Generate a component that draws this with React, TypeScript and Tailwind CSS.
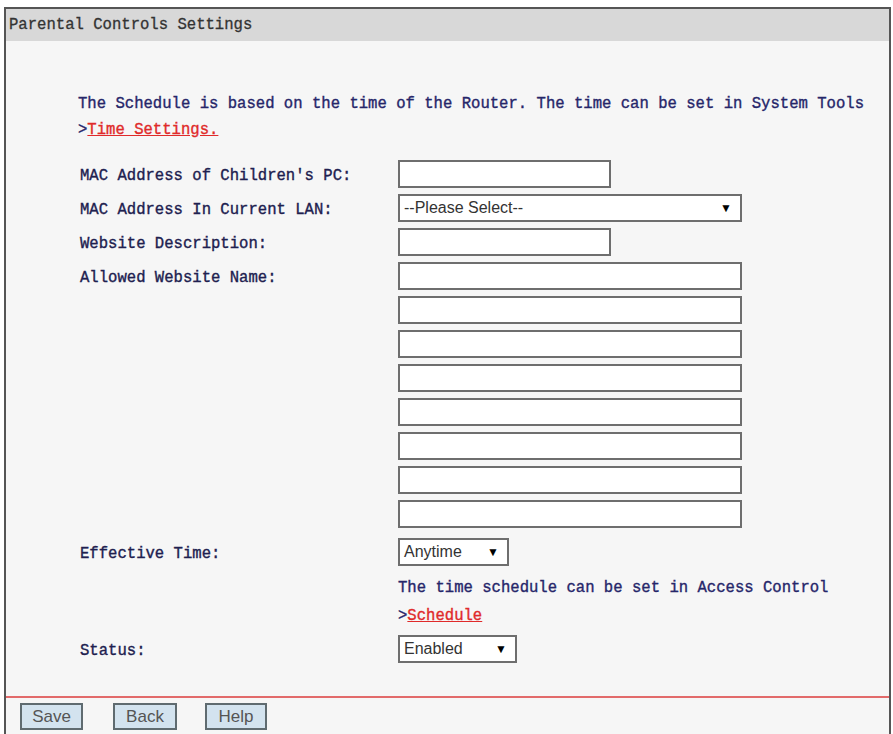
const mono = { fontFamily: '"Liberation Mono", "DejaVu Sans Mono", monospace' };

const TextBox = ({ wide }: { wide?: boolean }) => (
  <div
    className={`h-[28px] border-2 border-[#6e6e6e] bg-white ${wide ? "w-[344px]" : "w-[213px]"}`}
  />
);

const Dropdown = ({ value, width }: { value: string; width: string }) => (
  <div
    className={`flex h-[28px] items-center justify-between border-2 border-[#6e6e6e] bg-white pl-[4px] pr-[8px] font-['Liberation_Sans',Arial,sans-serif] text-[16px] text-[#333] ${width}`}
  >
    <span>{value}</span>
    <span className="text-[12px] text-black">▼</span>
  </div>
);

const Row = ({ label, children }: { label?: string; children: React.ReactNode }) => (
  <div className="flex h-[34px] items-center">
    <div className="w-[392px] pl-[74px] pt-[5px] text-[#20204f] [-webkit-text-stroke:0.35px]">{label}</div>
    {children}
  </div>
);

const Button = ({ label, w }: { label: string; w: string }) => (
  <button
    className={`h-[27px] border-2 border-[#5f6b70] bg-[#d3e3ef] font-['Liberation_Sans',Arial,sans-serif] text-[17px] leading-none text-[#555] ${w}`}
  >
    {label}
  </button>
);

export default function App() {
  return (
    <div className="h-[734px] w-[893px] overflow-hidden bg-white pt-[7px] text-[15.6px]" style={mono}>
      <div className="ml-[4px] mr-[2px] flex h-[727px] flex-col border-x-2 border-t-2 border-[#555] bg-[#f6f6f6]">
        {/* header bar */}
        <div className="flex h-[32px] items-center bg-[#d8d8d8] pl-[3px] pt-[2px] text-[#333] [-webkit-text-stroke:0.3px]">
          Parental Controls Settings
        </div>

        <div className="flex-1 pt-[50px]">
          <p className="pl-[72px] leading-[26px] text-[#26266a] [-webkit-text-stroke:0.35px]">
            The Schedule is based on the time of the Router. The time can be set in System Tools
            <br />
            &gt;<span className="text-[#e02a2a] underline">Time Settings.</span>
          </p>

          <div className="mt-[14px]">
            <Row label="MAC Address of Children's PC:">
              <TextBox />
            </Row>
            <Row label="MAC Address In Current LAN:">
              <Dropdown value="--Please Select--" width="w-[344px]" />
            </Row>
            <Row label="Website Description:">
              <TextBox />
            </Row>
            <Row label="Allowed Website Name:">
              <TextBox wide />
            </Row>
            {[0, 1, 2, 3, 4, 5, 6].map((i) => (
              <Row key={i}>
                <TextBox wide />
              </Row>
            ))}
          </div>

          <div className="mt-[4px]">
            <Row label="Effective Time:">
              <Dropdown value="Anytime" width="w-[111px]" />
            </Row>
          </div>
          <p className="mt-[5px] pl-[392px] leading-[28px] text-[#26266a] [-webkit-text-stroke:0.35px]">
            The time schedule can be set in Access Control
            <br />
            &gt;<span className="text-[#e02a2a] underline">Schedule</span>
          </p>
          <div className="mt-[2px]">
            <Row label="Status:">
              <Dropdown value="Enabled" width="w-[119px]" />
            </Row>
          </div>
        </div>

        {/* footer */}
        <div className="h-[38px] border-t-2 border-[#e26a6a]">
          <div className="flex pl-[14px] pt-[5px]">
            <Button label="Save" w="w-[63px]" />
            <div className="ml-[30px]">
              <Button label="Back" w="w-[64px]" />
            </div>
            <div className="ml-[28px]">
              <Button label="Help" w="w-[62px]" />
            </div>
          </div>
        </div>
      </div>
    </div>
  );
}
